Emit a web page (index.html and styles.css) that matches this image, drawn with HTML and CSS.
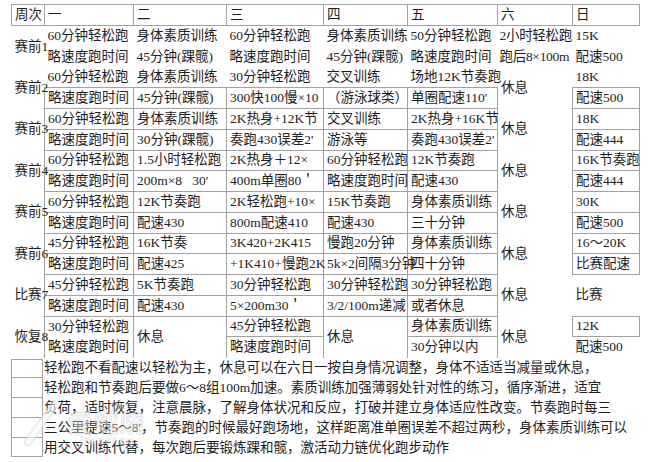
FILE: index.html
```html
<!DOCTYPE html>
<html lang="zh-CN">
<head>
<meta charset="utf-8">
<title>训练计划</title>
<link rel="stylesheet" href="styles.css">
</head>
<body>
<div class="page">
  <table class="plan">
    <colgroup>
      <col class="c0"><col class="c1"><col class="c2"><col class="c3"><col class="c4"><col class="c5"><col class="c6"><col class="c7">
    </colgroup>
    <tr class="head">
      <td class="b">周次</td><td class="b">一</td><td class="b">二</td><td class="b">三</td><td class="b">四</td><td class="b">五</td><td class="b">六</td><td class="b">日</td>
    </tr>
    <!-- 赛前1 -->
    <tr>
      <td rowspan="2" class="lbl">赛前1</td>
      <td>60分钟轻松跑</td><td>身体素质训练</td><td>60分钟轻松跑</td><td>身体素质训练</td><td>50分钟轻松跑</td><td class="sat">2小时轻松跑</td><td>15K</td>
    </tr>
    <tr>
      <td>略速度跑时间</td><td>45分钟(踝髋)</td><td>略速度跑时间</td><td>45分钟(踝髋)</td><td>略速度跑时间</td><td class="sat">跑后8×100m</td><td>配速500</td>
    </tr>
    <!-- 赛前2 -->
    <tr>
      <td rowspan="2" class="lbl">赛前2</td>
      <td>60分钟轻松跑</td><td>身体素质训练</td><td>30分钟轻松跑</td><td>交叉训练</td><td>场地12K节奏跑</td><td rowspan="2">休息</td><td>18K</td>
    </tr>
    <tr>
      <td class="b">略速度跑时间</td><td class="b">45分钟(踝髋)</td><td class="b">300快100慢×10</td><td class="b">（游泳球类）</td><td class="b">单圈配速110'</td><td class="b">配速500</td>
    </tr>
    <!-- 赛前3 -->
    <tr>
      <td rowspan="2" class="lbl">赛前3</td>
      <td class="b">60分钟轻松跑</td><td class="b">身体素质训练</td><td class="b">2K热身+12K节</td><td class="b">交叉训练</td><td class="b">2K热身+16K节</td><td rowspan="2">休息</td><td class="b">18K</td>
    </tr>
    <tr>
      <td class="b">略速度跑时间</td><td class="b">30分钟(踝髋)</td><td class="b">奏跑430误差2'</td><td class="b">游泳等</td><td class="b">奏跑430误差2'</td><td class="b">配速444</td>
    </tr>
    <!-- 赛前4 -->
    <tr>
      <td rowspan="2" class="lbl">赛前4</td>
      <td class="b">60分钟轻松跑</td><td class="b">1.5小时轻松跑</td><td class="b">2K热身＋12×</td><td class="b">60分钟轻松跑</td><td class="b">12K节奏跑</td><td rowspan="2">休息</td><td class="b">16K节奏跑</td>
    </tr>
    <tr>
      <td class="b">略速度跑时间</td><td class="b">200m×8&nbsp;&nbsp;&nbsp;30'</td><td class="b">400m单圈80＇</td><td class="b">略速度跑时间</td><td class="b">配速430</td><td class="b">配速444</td>
    </tr>
    <!-- 赛前5 -->
    <tr>
      <td rowspan="2" class="lbl">赛前5</td>
      <td class="b">60分钟轻松跑</td><td class="b">12K节奏跑</td><td class="b">2K轻松跑+10×</td><td class="b">15K节奏跑</td><td class="b">身体素质训练</td><td rowspan="2">休息</td><td class="b">30K</td>
    </tr>
    <tr>
      <td class="b">略速度跑时间</td><td class="b">配速430</td><td class="b">800m配速410</td><td class="b">配速430</td><td class="b">三十分钟</td><td class="b">配速500</td>
    </tr>
    <!-- 赛前6 -->
    <tr>
      <td rowspan="2" class="lbl">赛前6</td>
      <td class="b">45分钟轻松跑</td><td class="b">16K节奏</td><td class="b">3K420+2K415</td><td class="b">慢跑20分钟</td><td class="b">身体素质训练</td><td rowspan="2">休息</td><td class="b">16～20K</td>
    </tr>
    <tr>
      <td class="b">略速度跑时间</td><td class="b">配速425</td><td class="b">+1K410+慢跑2K</td><td class="b">5k×2间隔3分钟</td><td class="b">四十分钟</td><td class="b">比赛配速</td>
    </tr>
    <!-- 比赛7 -->
    <tr>
      <td rowspan="2" class="lbl">比赛7</td>
      <td class="b">45分钟轻松跑</td><td class="b">5K节奏跑</td><td class="b">30分钟轻松跑</td><td class="b">30分钟轻松跑</td><td class="b">30分钟轻松跑</td><td rowspan="2">休息</td><td rowspan="2">比赛</td>
    </tr>
    <tr>
      <td class="b">略速度跑时间</td><td class="b">配速430</td><td class="b">5×200m30＇</td><td class="b">3/2/100m递减</td><td class="b">或者休息</td>
    </tr>
    <!-- 恢复8 -->
    <tr>
      <td rowspan="2" class="lbl">恢复8</td>
      <td class="lrt">30分钟轻松跑</td><td rowspan="2" class="lrt">休息</td><td class="b">45分钟轻松跑</td><td rowspan="2" class="lrt">休息</td><td class="b">身体素质训练</td><td rowspan="2">休息</td><td class="b">12K</td>
    </tr>
    <tr>
      <td class="lr">略速度跑时间</td><td class="lrt">略速度跑时间</td><td class="lrt">30分钟以内</td><td>配速500</td>
    </tr>
  </table>

  <div class="notes">
    <div class="note"><span class="box"></span><span class="txt">轻松跑不看配速以轻松为主，休息可以在六日一按自身情况调整，身体不适适当减量或休息，</span></div>
    <div class="note"><span class="box"></span><span class="txt">轻松跑和节奏跑后要做6～8组100m加速。素质训练加强薄弱处针对性的练习，循序渐进，适宜</span></div>
    <div class="note"><span class="box"></span><span class="txt">负荷，适时恢复，注意晨脉，了解身体状况和反应，打破并建立身体适应性改变。节奏跑时每三</span></div>
    <div class="note"><span class="box"></span><span class="txt">三公里提速5～8'，节奏跑的时候最好跑场地，这样距离准单圈误差不超过两秒，身体素质训练可以</span></div>
    <div class="note"><span class="box"></span><span class="txt">用交叉训练代替，每次跑后要锻炼踝和髋，激活动力链优化跑步动作</span></div>
  </div>

  <div class="watermark" aria-hidden="true">
    <svg class="wm-mark" width="36" height="46" viewBox="0 0 36 46">
      <path d="M4 42 C12 31 20 20 31 4" fill="none" stroke="#dcdcdc" stroke-width="8" stroke-linecap="round"/>
      <path d="M4 42 C12 31 20 20 31 4" fill="none" stroke="#fbfbfb" stroke-width="5" stroke-linecap="round"/>
    </svg>
    <div class="wm-text">
      <span class="wm-cn">爱燃烧</span>
      <span class="wm-en">iranshao</span>
    </div>
  </div>
</div>
</body>
</html>
```

FILE: styles.css
```css
html, body {
  margin: 0;
  padding: 0;
  background: #ffffff;
}

body {
  font-family: "Liberation Serif", "Noto Sans CJK SC", serif;
  font-size: 13.5px;
  color: #1e1e1e;
}

.page {
  position: relative;
  width: 660px;
  height: 462px;
  padding: 4px 0 0 11px;
  box-sizing: border-box;
  overflow: hidden;
}

.plan {
  border-collapse: collapse;
  table-layout: fixed;
  width: 628px;
}

.c0 { width: 33px; }
.c1 { width: 89px; }
.c2 { width: 93px; }
.c3 { width: 97px; }
.c4 { width: 84px; }
.c5 { width: 90px; }
.c6 { width: 75px; }
.c7 { width: 67px; }

.plan td {
  padding: 0 0 0 3px;
  height: 20.75px;
  line-height: 14px;
  white-space: nowrap;
  vertical-align: middle;
  overflow: visible;
  border: none;
  box-sizing: border-box;
}

.plan tr.head td {
  height: 21px;
}

.plan td.sat {
  padding-left: 2px;
  letter-spacing: -0.3px;
}

.plan td.b {
  border: 1px solid #a2a2a2;
}

.plan td.lrt {
  border-left: 1px solid #a2a2a2;
  border-right: 1px solid #a2a2a2;
  border-top: 1px solid #a2a2a2;
}

.plan td.lr {
  border-left: 1px solid #a2a2a2;
  border-right: 1px solid #a2a2a2;
}

.notes {
  display: flex;
  flex-direction: column;
  margin-top: 1px;
}

.note {
  display: flex;
  align-items: center;
  height: 19.8px;
}

.box {
  width: 32px;
  height: 100%;
  box-sizing: border-box;
  border: 1px solid #a2a2a2;
  flex: none;
}

.note + .note .box {
  border-top: none;
}

.txt {
  padding-left: 1px;
  white-space: nowrap;
  line-height: 14px;
}

.watermark {
  position: absolute;
  left: 24px;
  top: 400px;
  display: flex;
  align-items: flex-end;
  gap: 8px;
  opacity: 0.6;
  pointer-events: none;
}

.wm-text {
  display: flex;
  flex-direction: column;
  align-items: center;
  line-height: 1;
}

.wm-cn {
  font-family: "Noto Sans CJK SC", sans-serif;
  font-weight: 700;
  font-size: 24px;
  color: rgba(255, 255, 255, 0.8);
  -webkit-text-stroke: 1px rgba(190, 190, 190, 0.7);
  letter-spacing: 2px;
}

.wm-en {
  font-family: "DejaVu Sans", sans-serif;
  font-weight: 700;
  font-size: 11px;
  color: rgba(255, 255, 255, 0.8);
  -webkit-text-stroke: 0.6px rgba(190, 190, 190, 0.7);
  margin-top: 1px;
}
```
